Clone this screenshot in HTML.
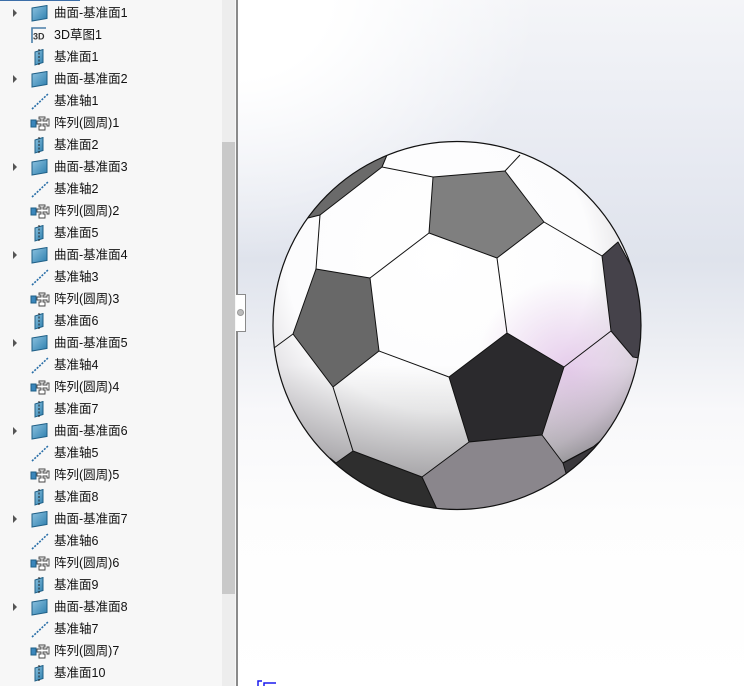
<!DOCTYPE html>
<html><head><meta charset="utf-8"><style>
*{margin:0;padding:0;box-sizing:border-box}
body{width:744px;height:686px;overflow:hidden;position:relative;background:#fff;font-family:"Liberation Sans","Noto Sans CJK SC",sans-serif}
#panel{position:absolute;left:0;top:0;width:237px;height:686px;background:#f7f7f7}
#sb{position:absolute;left:222px;top:0;width:13px;height:686px;background:#ededed}
#thumb{position:absolute;left:222px;top:142px;width:13px;height:452px;background:#c9c9c9}
#border{position:absolute;left:236px;top:0;width:2px;height:686px;background:#8a8a8a}
#tab{position:absolute;left:236px;top:294px;width:10px;height:38px;background:#fff;border:1px solid #8a8a8a;border-left:none}
#tab i{position:absolute;left:1px;top:14px;width:7px;height:7px;border-radius:50%;background:#bbb;border:1px solid #999}
#view{position:absolute;left:238px;top:0;width:506px;height:686px;
background:radial-gradient(ellipse 300px 260px at 0px 0px,#fff 30%,rgba(255,255,255,0) 100%),
linear-gradient(180deg,#f4f5f8 0%,#e6e9f1 25%,#dfe3ec 38%,#eceef3 50%,#f8f8fa 60%,#fdfdfd 75%,#fff 100%)}
.row{position:absolute;left:0;height:22px;width:220px;font-size:12.5px;color:#111;line-height:22px}
.row span{position:absolute;left:54px;top:0;white-space:nowrap}
.row svg{position:absolute;left:30px;top:3px;width:20px;height:17px}
.arr{position:absolute;left:13px;top:7px;width:0;height:0;border-left:4px solid #555;border-top:4px solid transparent;border-bottom:4px solid transparent}
#topline{position:absolute;left:0;top:0;width:80px;height:1px;background:#3c6ea8}
</style></head><body>
<svg width="0" height="0" style="position:absolute">
<defs>
<linearGradient id="bg1" x1="0" y1="0" x2="1" y2="1"><stop offset="0" stop-color="#8ec3e0"/><stop offset="1" stop-color="#2d7fae"/></linearGradient>
<symbol id="surf" viewBox="0 0 20 17"><path d="M2 3 L17 0.5 L17 13.5 L2 16 Z" fill="url(#bg1)" stroke="#1f5f86" stroke-width="1"/></symbol>
<symbol id="plane" viewBox="0 0 20 17"><path d="M5 3 L13 0.5 L13 13.5 L5 16 Z" fill="url(#bg1)" stroke="#1f5f86" stroke-width="1"/><path d="M9 0 V17" stroke="#222" stroke-width="1" stroke-dasharray="2 1.5"/></symbol>
<symbol id="axis" viewBox="0 0 20 17"><path d="M2 16 L18 1" stroke="#2a6fa8" stroke-width="1.6" stroke-dasharray="2 1.3"/></symbol>
<symbol id="pat" viewBox="0 0 20 17"><path d="M1 5 H6 V12 H1 Z" fill="#3a86bb" stroke="#1f5f86"/><path d="M9 2 H15 V4 H13 V6 H17 V4 H19 V11 H17 V9 H13 V11 H15 V15 H9 V11 H11 V9 H7 V6 H11 V4 H9 Z" fill="#fff" stroke="#444" stroke-width="0.9"/></symbol>
<symbol id="sk" viewBox="0 0 20 17"><path d="M2 16 V1 H16" fill="none" stroke="#4a7fa8" stroke-width="1.6"/><text x="3" y="12.5" font-size="9" font-weight="bold" fill="#333" font-family="Liberation Sans,sans-serif">3D</text></symbol>
</defs></svg>
<div id="panel">
<div id="topline"></div>
<div class="row" style="top:2px"><i class="arr"></i><svg><use href="#surf"/></svg><span>曲面-基准面1</span></div>
<div class="row" style="top:24px"><svg><use href="#sk"/></svg><span>3D草图1</span></div>
<div class="row" style="top:46px"><svg><use href="#plane"/></svg><span>基准面1</span></div>
<div class="row" style="top:68px"><i class="arr"></i><svg><use href="#surf"/></svg><span>曲面-基准面2</span></div>
<div class="row" style="top:90px"><svg><use href="#axis"/></svg><span>基准轴1</span></div>
<div class="row" style="top:112px"><svg><use href="#pat"/></svg><span>阵列(圆周)1</span></div>
<div class="row" style="top:134px"><svg><use href="#plane"/></svg><span>基准面2</span></div>
<div class="row" style="top:156px"><i class="arr"></i><svg><use href="#surf"/></svg><span>曲面-基准面3</span></div>
<div class="row" style="top:178px"><svg><use href="#axis"/></svg><span>基准轴2</span></div>
<div class="row" style="top:200px"><svg><use href="#pat"/></svg><span>阵列(圆周)2</span></div>
<div class="row" style="top:222px"><svg><use href="#plane"/></svg><span>基准面5</span></div>
<div class="row" style="top:244px"><i class="arr"></i><svg><use href="#surf"/></svg><span>曲面-基准面4</span></div>
<div class="row" style="top:266px"><svg><use href="#axis"/></svg><span>基准轴3</span></div>
<div class="row" style="top:288px"><svg><use href="#pat"/></svg><span>阵列(圆周)3</span></div>
<div class="row" style="top:310px"><svg><use href="#plane"/></svg><span>基准面6</span></div>
<div class="row" style="top:332px"><i class="arr"></i><svg><use href="#surf"/></svg><span>曲面-基准面5</span></div>
<div class="row" style="top:354px"><svg><use href="#axis"/></svg><span>基准轴4</span></div>
<div class="row" style="top:376px"><svg><use href="#pat"/></svg><span>阵列(圆周)4</span></div>
<div class="row" style="top:398px"><svg><use href="#plane"/></svg><span>基准面7</span></div>
<div class="row" style="top:420px"><i class="arr"></i><svg><use href="#surf"/></svg><span>曲面-基准面6</span></div>
<div class="row" style="top:442px"><svg><use href="#axis"/></svg><span>基准轴5</span></div>
<div class="row" style="top:464px"><svg><use href="#pat"/></svg><span>阵列(圆周)5</span></div>
<div class="row" style="top:486px"><svg><use href="#plane"/></svg><span>基准面8</span></div>
<div class="row" style="top:508px"><i class="arr"></i><svg><use href="#surf"/></svg><span>曲面-基准面7</span></div>
<div class="row" style="top:530px"><svg><use href="#axis"/></svg><span>基准轴6</span></div>
<div class="row" style="top:552px"><svg><use href="#pat"/></svg><span>阵列(圆周)6</span></div>
<div class="row" style="top:574px"><svg><use href="#plane"/></svg><span>基准面9</span></div>
<div class="row" style="top:596px"><i class="arr"></i><svg><use href="#surf"/></svg><span>曲面-基准面8</span></div>
<div class="row" style="top:618px"><svg><use href="#axis"/></svg><span>基准轴7</span></div>
<div class="row" style="top:640px"><svg><use href="#pat"/></svg><span>阵列(圆周)7</span></div>
<div class="row" style="top:662px"><svg><use href="#plane"/></svg><span>基准面10</span></div>
</div>
<div id="sb"></div><div id="thumb"></div>
<div id="view"></div>
<div id="border"></div>
<div id="tab"><i></i></div>
<svg style="position:absolute;left:0;top:0" width="744" height="686" viewBox="0 0 744 686">
<defs>
<clipPath id="bc"><circle cx="457" cy="325.5" r="184"/></clipPath>
<radialGradient id="wsh" cx="0.45" cy="0.32" r="0.75"><stop offset="0" stop-color="#fff"/><stop offset="0.55" stop-color="#fcfcfd"/><stop offset="0.8" stop-color="#d6d4d8"/><stop offset="1" stop-color="#8e8b92"/></radialGradient>
<radialGradient id="pink" cx="0.8" cy="0.62" r="0.25"><stop offset="0" stop-color="#e4c8ea" stop-opacity="0.9"/><stop offset="1" stop-color="#e4c8ea" stop-opacity="0"/></radialGradient>
<linearGradient id="lowsh" x1="0" y1="0" x2="0" y2="1"><stop offset="0.6" stop-color="#000" stop-opacity="0"/><stop offset="1" stop-color="#000" stop-opacity="0.3"/></linearGradient>
</defs>
<g clip-path="url(#bc)" stroke="#111" stroke-width="1" stroke-linejoin="round">
<circle cx="457" cy="325.5" r="184" fill="url(#wsh)" stroke="none"/>
<circle cx="457" cy="325.5" r="184" fill="url(#pink)" stroke="none"/>
<rect x="270" y="140" width="380" height="375" fill="url(#lowsh)" stroke="none"/>
<path d="M433 177 L505 171 L544 222 L497 258 L429 233 Z" fill="#7f7f7f"/>
<path d="M316 269 L370 278 L379 351 L333 387 L293 334 Z" fill="#686868"/>
<path d="M507 333 L564 367 L542 435 L469 442 L449 377 Z" fill="#2b2a2d"/>
<path d="M602 256 L618 242 L650 300 L650 360 L633 357 L611 331 Z" fill="#45424a"/>
<path d="M336 463 L353 451 L422 477 L442 515 L320 515 Z" fill="#2e2e2e"/>
<path d="M422 477 L469 442 L542 435 L563 463 L600 520 L442 520 Z" fill="#8a868c"/>
<path d="M387 155 L382 167 L320 215 L308 218 L300 140 L390 140 Z" fill="#6a6a6a"/>
<path d="M563 463 L593 447 L650 400 L650 520 L580 520 Z" fill="#3a383c"/>
<g fill="none">
<path d="M370 278 L429 233"/><path d="M497 258 L507 333"/><path d="M544 222 L602 256"/>
<path d="M611 331 L564 367"/><path d="M379 351 L449 377"/><path d="M333 387 L353 451"/>
<path d="M316 269 L320 215"/><path d="M382 167 L433 177"/><path d="M505 171 L520 155"/>
<path d="M293 334 L274 348"/><path d="M563 463 L593 447"/><path d="M336 463 L330 458"/>
</g>
</g>
<circle cx="457" cy="325.5" r="184" fill="none" stroke="#111" stroke-width="1.2"/>
<path d="M258 686 V681 H262 M264 686 V683 H276" stroke="#1a1aee" stroke-width="1.5" fill="none"/>
</svg>
</body></html>
